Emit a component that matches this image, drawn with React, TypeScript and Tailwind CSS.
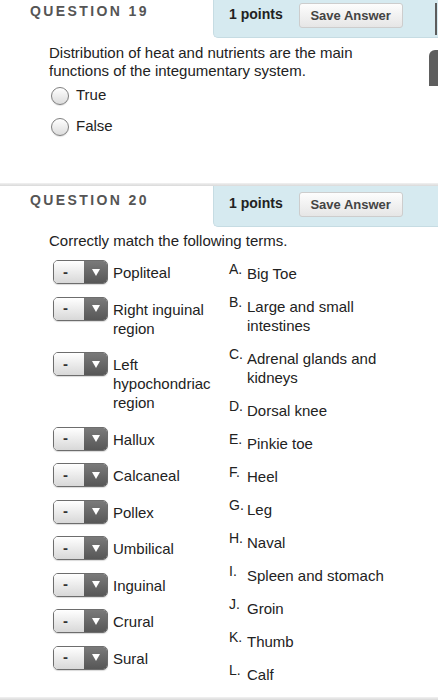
import React from 'react';

const LEFT_ROWS = [
  'Popliteal',
  'Right inguinal region',
  'Left hypochondriac region',
  'Hallux',
  'Calcaneal',
  'Pollex',
  'Umbilical',
  'Inguinal',
  'Crural',
  'Sural',
];

const OPTIONS = [
  ['A.', 'Big Toe'],
  ['B.', 'Large and small intestines'],
  ['C.', 'Adrenal glands and kidneys'],
  ['D.', 'Dorsal knee'],
  ['E.', 'Pinkie toe'],
  ['F.', 'Heel'],
  ['G.', 'Leg'],
  ['H.', 'Naval'],
  ['I.', 'Spleen and stomach'],
  ['J.', 'Groin'],
  ['K.', 'Thumb'],
  ['L.', 'Calf'],
];

function Header({ num }: { num: number }) {
  return (
    <div className="flex h-[41px]">
      <div className="flex-1 pl-[30px] pt-[6px] text-[14px] leading-[17px] font-bold tracking-[2.4px] text-[#555]">
        QUESTION {num}
      </div>
      <div className="flex w-[225px] items-start rounded-bl-[5px] border-b border-l border-[#c6dce3] bg-[#d6eaf0] pl-[15px] pt-[6px]">
        <span className="mt-[3px] text-[14px] leading-[17px] font-bold text-[#222]">1 points</span>
        <button className="ml-[16px] h-[25px] w-[104px] rounded-[3px] border border-[#cdcdcd] bg-linear-to-b from-[#fdfdfd] to-[#e6e6e6] text-[13px] font-bold text-[#444]">
          Save Answer
        </button>
      </div>
    </div>
  );
}

function Radio({ label }: { label: string }) {
  return (
    <div className="flex h-[31px] items-center pl-[2px]">
      <span className="h-[18px] w-[18px] rounded-full border border-[#7f7f7f] bg-linear-to-b from-white to-[#dcdcdc] shadow-[0_1px_1px_rgba(0,0,0,0.12)]" />
      <span className="ml-[7px] text-[15px] text-[#222]">{label}</span>
    </div>
  );
}

function Dropdown() {
  return (
    <div className="flex h-[24px] w-[55px] shrink-0 overflow-hidden rounded-[5px] border border-[#6d6d6d] shadow-[0_1px_1px_rgba(0,0,0,0.15)]">
      <div className="flex w-[30px] items-center bg-linear-to-b from-white to-[#d8d8d8] pl-[9px] text-[15px] font-bold text-[#333]">-</div>
      <div className="flex flex-1 items-center justify-center bg-linear-to-b from-[#7a7a7a] to-[#575757]">
        <svg width="8" height="7" viewBox="0 0 8 7">
          <path d="M0 0h8L4 7z" fill="#fff" />
        </svg>
      </div>
    </div>
  );
}

function Divider() {
  return <div className="h-[3px] bg-linear-to-b from-[#f1f1f1] to-[#d9d9d9]" />;
}

export default function App() {
  return (
    <div className="relative flex h-[700px] w-[438px] flex-col overflow-hidden bg-white font-['Liberation_Sans',Arial,sans-serif] text-[#222]">
      {/* side tabs on the right edge */}
      <div className="absolute right-[1px] top-[3px] h-[32px] w-[2px] bg-[#5c5c5c]" />
      <div className="absolute right-0 top-[50px] h-[36px] w-[9px] rounded-tl-[6px] bg-[#5e5e5e]" />

      {/* Question 19 */}
      <div className="-mt-[3px]">
        <Header num={19} />
        <div className="mt-[6px] pl-[49px]">
          <p className="w-[350px] text-[15px] leading-[18px]">
            Distribution of heat and nutrients are the main functions of the integumentary system.
          </p>
          <div>
            <Radio label="True" />
            <Radio label="False" />
          </div>
        </div>
      </div>

      <div className="mt-[41px]">
        <Divider />
      </div>

      {/* Question 20 */}
      <Header num={20} />
      <div className="mt-[5px] pl-[49px] text-[15px] leading-[18px]">Correctly match the following terms.</div>

      <div className="mt-[10px] flex pl-[53px]">
        <div className="flex w-[176px] flex-col gap-[10.5px]">
          {LEFT_ROWS.map(label => (
            <div key={label} className="flex items-start">
              <Dropdown />
              <span className="ml-[5px] w-[105px] pb-[4px] pt-[3px] text-[15px] leading-[19px]">{label}</span>
            </div>
          ))}
        </div>
        <div className="flex flex-col gap-[11px] pt-[1px]">
          {OPTIONS.map(([letter, text]) => (
            <div key={letter} className="flex items-start">
              <span className="w-[18px] text-[14px] leading-[16px]">{letter}</span>
              <span className="w-[150px] pt-[3px] text-[15px] leading-[19px]">{text}</span>
            </div>
          ))}
        </div>
      </div>

      <div className="mt-auto">
        <Divider />
      </div>
    </div>
  );
}
